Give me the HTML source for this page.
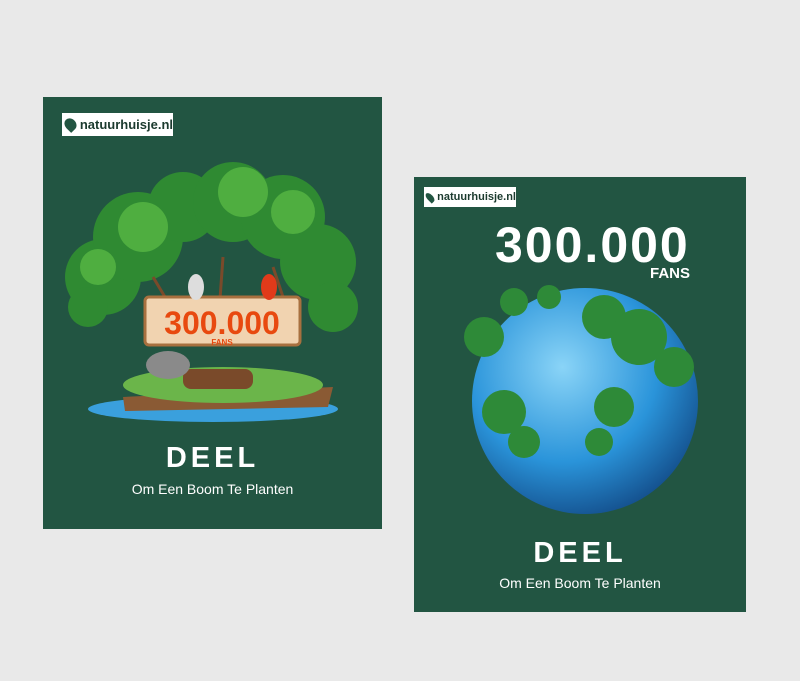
<!DOCTYPE html>
<html><head><style>
body{margin:0;width:800px;height:681px;background:#e9e9e9;position:relative;overflow:hidden;font-family:"Liberation Sans",sans-serif}
.card{position:absolute;background:#225542}
.logo{position:absolute;background:#fff;display:flex;align-items:center;font-weight:bold;color:#1b3a2e}
.leaf{background:#225542;border-radius:50% 50% 50% 0;transform:rotate(-45deg);margin:0 4px 0 3px}
.deel{position:absolute;color:#fff;font-weight:bold;text-align:center;letter-spacing:4px}
.sub{position:absolute;color:#fff;text-align:center}
</style></head><body>
<div class="card" style="left:43px;top:97px;width:339px;height:432px">
 <div class="logo" style="left:19px;top:16px;width:111px;height:23px;font-size:13px"><div class="leaf" style="width:13px;height:13px"></div>natuurhuisje.nl</div>
 <svg style="position:absolute;left:0;top:0" width="339" height="432">
  <ellipse cx="170" cy="312" rx="125" ry="13" fill="#3aa0dd"/>
  <path d="M80 300 L290 290 L285 310 L82 314Z" fill="#8a5a34"/>
  <ellipse cx="180" cy="288" rx="100" ry="18" fill="#6bb54a"/>
  <g fill="#2f8a32">
   <circle cx="60" cy="180" r="38"/><circle cx="95" cy="140" r="45"/><circle cx="140" cy="110" r="35"/>
   <circle cx="190" cy="105" r="40"/><circle cx="240" cy="120" r="42"/><circle cx="275" cy="165" r="38"/>
   <circle cx="290" cy="210" r="25"/><circle cx="45" cy="210" r="20"/>
  </g>
  <g fill="#4fae40">
   <circle cx="100" cy="130" r="25"/><circle cx="200" cy="95" r="25"/><circle cx="250" cy="115" r="22"/><circle cx="55" cy="170" r="18"/>
  </g>
  <path d="M110 180 L140 230 M230 170 L250 230 M180 160 L175 230" stroke="#7a4a2a" stroke-width="3"/>
  <rect x="102" y="200" width="155" height="48" rx="4" fill="#f1d3b0" stroke="#a8703f" stroke-width="3"/>
  <text x="179" y="237" text-anchor="middle" font-weight="bold" font-size="32" fill="#e8490f">300.000</text>
  <text x="179" y="248" text-anchor="middle" font-weight="bold" font-size="8" fill="#e8490f">FANS</text>
  <rect x="140" y="272" width="70" height="20" rx="8" fill="#7a4a2a"/>
  <ellipse cx="125" cy="268" rx="22" ry="14" fill="#8a8a8a"/>
  <ellipse cx="153" cy="190" rx="8" ry="13" fill="#ddd"/><ellipse cx="226" cy="190" rx="8" ry="13" fill="#e03a1a"/>
 </svg>
 <div class="deel" style="left:0;width:339px;top:345px;font-size:29px">DEEL</div>
 <div class="sub" style="left:0;width:339px;top:384px;font-size:14px">Om Een Boom Te Planten</div>
</div>
<div class="card" style="left:414px;top:177px;width:332px;height:435px">
 <div class="logo" style="left:10px;top:10px;width:92px;height:20px;font-size:11px"><div class="leaf" style="width:11px;height:11px"></div>natuurhuisje.nl</div>
 <div style="position:absolute;left:81px;top:43px;color:#fff;font-weight:bold;font-size:50px;line-height:50px;letter-spacing:2px">300.000</div>
 <div style="position:absolute;left:236px;top:88px;color:#fff;font-weight:bold;font-size:15px">FANS</div>
 <svg style="position:absolute;left:0;top:0" width="332" height="435">
  <defs><radialGradient id="g" cx="40%" cy="35%" r="70%"><stop offset="0" stop-color="#8ad4f7"/><stop offset=".6" stop-color="#2a94da"/><stop offset="1" stop-color="#134d8a"/></radialGradient></defs>
  <circle cx="171" cy="224" r="113" fill="url(#g)"/>
  <g fill="#2e8a38">
   <circle cx="70" cy="160" r="20"/><circle cx="100" cy="125" r="14"/><circle cx="135" cy="120" r="12"/>
   <circle cx="190" cy="140" r="22"/><circle cx="225" cy="160" r="28"/><circle cx="260" cy="190" r="20"/>
   <circle cx="200" cy="230" r="20"/><circle cx="185" cy="265" r="14"/><circle cx="90" cy="235" r="22"/><circle cx="110" cy="265" r="16"/>
  </g>
 </svg>
 <div class="deel" style="left:0;width:332px;top:360px;font-size:29px">DEEL</div>
 <div class="sub" style="left:0;width:332px;top:398px;font-size:14px">Om Een Boom Te Planten</div>
</div>
</body></html>
